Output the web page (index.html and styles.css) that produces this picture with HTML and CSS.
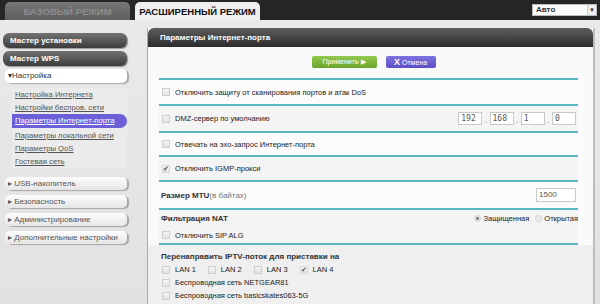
FILE: index.html
```html
<!DOCTYPE html>
<html lang="ru">
<head>
    <meta charset="UTF-8">
    <title>Параметры Интернет-порта</title>
    <link rel="stylesheet" href="styles.css">
</head>
<body>
    <div class="topbar">
        <div class="tab tab-basic">БАЗОВЫЙ РЕЖИМ</div>
        <div class="tab tab-adv">РАСШИРЕННЫЙ РЕЖИМ</div>
        <div class="lang">Авто<span class="lang-arrow">▼</span></div>
    </div>

    <div class="main">
        <div class="side">
            <div class="wiz">Мастер установки</div>
            <div class="wiz">Мастер WPS</div>
            <div class="group open">▾Настройка</div>
            <ul class="sub">
                <li>Настройка Интернета</li>
                <li>Настройки беспров. сети</li>
                <li class="active">Параметры Интернет-порта</li>
                <li>Параметры локальной сети</li>
                <li>Параметры QoS</li>
                <li>Гостевая сеть</li>
            </ul>
            <div class="group closed">▸ USB-накопитель</div>
            <div class="group closed">▸ Безопасность</div>
            <div class="group closed">▸ Администрирование</div>
            <div class="group closed">▸ Дополнительные настройки</div>
        </div>

        <div class="panel">
            <div class="panel-head">Параметры Интернет-порта</div>
            <div class="panel-body">
                <div class="actions">
                    <span class="btn btn-apply">Применить ▶</span>
                    <span class="btn btn-cancel"><b>X</b>Отмена</span>
                </div>

                <div class="row r1">
                    <span class="cb"></span>
                    <span class="lbl">Отключить защиту от сканирования портов и атак DoS</span>
                </div>
                <div class="row r2 alt">
                    <span class="cb"></span>
                    <span class="lbl">DMZ-сервер по умолчанию</span>
                    <div class="ip">
                        <span class="box">192</span>.
                        <span class="box">168</span>.
                        <span class="box">1</span>.
                        <span class="box">0</span>
                    </div>
                </div>
                <div class="row r3">
                    <span class="cb"></span>
                    <span class="lbl">Отвечать на эхо-запрос Интернет-порта</span>
                </div>
                <div class="row r4 alt">
                    <span class="cb on">✔</span>
                    <span class="lbl">Отключить IGMP-прокси</span>
                </div>
                <div class="row r5">
                    <span class="title">Размер MTU<span class="hint">(в байтах)</span></span>
                    <span class="box mtu">1500</span>
                </div>
                <div class="row r6 alt">
                    <div class="line">
                        <span class="title">Фильтрация NAT</span>
                        <div class="radios">
                            <span class="rd on"></span><span class="lbl">Защищенная</span>
                            <span class="rd"></span><span class="lbl">Открытая</span>
                        </div>
                    </div>
                    <div class="line">
                        <span class="cb"></span>
                        <span class="lbl">Отключить SIP ALG</span>
                    </div>
                </div>
                <div class="row r7">
                    <div class="line"><span class="title">Перенаправить IPTV-поток для приставки на</span></div>
                    <div class="line lans">
                        <span class="cb"></span><span class="lbl">LAN 1</span>
                        <span class="cb"></span><span class="lbl">LAN 2</span>
                        <span class="cb"></span><span class="lbl">LAN 3</span>
                        <span class="cb on">✔</span><span class="lbl">LAN 4</span>
                    </div>
                    <div class="line">
                        <span class="cb"></span>
                        <span class="lbl">Беспроводная сеть NETGEAR81</span>
                    </div>
                    <div class="line">
                        <span class="cb"></span>
                        <span class="lbl">Беспроводная сеть basicskates063-5G</span>
                    </div>
                </div>
            </div>
        </div>
    </div>
</body>
</html>
```

FILE: styles.css
```css
* {
    padding: 0;
    margin: 0;
    box-sizing: border-box;
}

body {
    width: 600px;
    height: 304px;
    overflow: hidden;
    background: #e4e4e4;
    font-family: "Liberation Sans", Arial, sans-serif;
    font-size: 8px;
    color: #333;
}

/* top bar */
.topbar {
    height: 20px;
    background: #262626;
    display: flex;
    align-items: flex-end;
    padding-left: 5px;
    gap: 5px;
}

.tab {
    width: 125px;
    height: 18px;
    border-radius: 5px 5px 0 0;
    font-size: 9.5px;
    font-weight: bold;
    line-height: 19px;
    text-align: center;
}

.tab-basic {
    background: linear-gradient(#777, #5e5e5e);
    color: #8c8c8c;
}

.tab-adv {
    background: #efefef;
    color: #111;
}

.lang {
    margin-left: auto;
    margin-right: 3px;
    margin-bottom: 4px;
    width: 65px;
    height: 12px;
    background: #fafafa;
    border: 1px solid #bbb;
    color: #333;
    font-size: 8px;
    font-weight: bold;
    line-height: 10px;
    padding-left: 3px;
    display: flex;
}

.lang-arrow {
    margin-left: auto;
    width: 9px;
    font-size: 6px;
    text-align: center;
    border-left: 1px solid #ccc;
    background: #eee;
}

.main {
    display: flex;
    padding-top: 8px;
    height: 284px;
    background: linear-gradient(#e9e9e9, #e2e2e2);
}

/* sidebar */
.side {
    width: 147px;
    padding: 5px 0 0 3px;
}

.wiz {
    width: 124px;
    height: 15px;
    margin-bottom: 3px;
    border-radius: 6px;
    background: linear-gradient(#737373, #3c3c3c);
    box-shadow: 1px 1px 1px #999;
    color: #fff;
    font-weight: bold;
    line-height: 15px;
    padding-left: 7px;
}

.group {
    width: 122px;
    height: 14px;
    margin-left: 2px;
    border-radius: 5px;
    line-height: 14px;
    padding-left: 3px;
}

.group.open {
    background: #fff;
    box-shadow: 2px 1px 1px #aaa;
    color: #333;
    margin-top: 2px;
}

.group.closed {
    background: linear-gradient(#fdfdfd, #e6e6e6);
    box-shadow: 2px 1px 1px #a5a5a5;
    color: #555;
    height: 13px;
    line-height: 13px;
    margin-bottom: 5px;
}

.sub {
    list-style: none;
    margin: 5px 0 9px 9px;
    width: 115px;
    background: #ebebeb;
    font-size: 7.7px;
}

.sub li {
    height: 13px;
    line-height: 13px;
    padding-left: 3px;
    color: #555;
    text-decoration: underline;
}

.sub li.active {
    background: #6c60d8;
    color: #fff;
    border-radius: 0 7px 7px 0;
    height: 14px;
    line-height: 14px;
    margin: 0 0 1px;
}

/* panel */
.panel {
    width: 448px;
    border-left: 1px solid #aaa;
    border-right: 2px solid #bdbdbd;
    background: #fafafa;
    display: flex;
    flex-direction: column;
}

.panel-head {
    height: 19px;
    background: linear-gradient(#5e5e5e, #2b2b2b);
    border-radius: 6px 6px 0 0;
    color: #fff;
    font-weight: bold;
    line-height: 19px;
    padding-left: 12px;
}

.panel-body {
    flex: 1;
    padding: 0 15px 0 11px;
}

.actions {
    height: 31px;
    display: flex;
    justify-content: center;
    padding: 9px 0 0 10px;
    gap: 9px;
}

.btn {
    height: 12px;
    border-radius: 2px;
    color: #fff;
    line-height: 12px;
    text-align: center;
    font-size: 7px;
}

.btn-apply {
    width: 65px;
    background: linear-gradient(#93c94f, #6aa52b);
}

.btn-cancel {
    width: 50px;
    background: linear-gradient(#7d72de, #5c4fc6);
}

.btn-cancel b {
    font-size: 9px;
    margin-right: 2px;
}

/* rows */
.row {
    border-top: 2px solid #58b6c3;
    display: flex;
    align-items: center;
    padding-left: 2px;
    background: #fbfbfb;
}

.row.alt {
    background: #f4f4f4;
}

.r1 { height: 26px; }
.r2 { height: 27px; padding-right: 2px; }
.r3 { height: 24px; }
.r4 { height: 25px; }
.r5 { height: 28px; justify-content: space-between; padding-right: 2px; }
.r6 { height: 37px; flex-direction: column; align-items: stretch; justify-content: center; gap: 4px; border-bottom: 2px solid #58b6c3; }
.r7 { flex-direction: column; align-items: stretch; padding-top: 5px; border-top: none; background: #efefef; margin: 0 -15px 0 -11px; padding-left: 13px; height: 60px; }

.line {
    display: flex;
    align-items: center;
    height: 13px;
}

.cb {
    width: 8px;
    height: 8px;
    border: 1px solid #cfcfcf;
    background: linear-gradient(#f4f4f4, #e2e2e2);
    margin: 0 5px 0 1px;
    font-size: 7px;
    line-height: 6px;
    color: #555;
    text-align: center;
}

.cb.on {
    border-color: #d8d8d8;
}

.lbl {
    color: #222;
    font-size: 7.5px;
}

.title {
    font-weight: bold;
    color: #333;
}

.hint {
    font-weight: normal;
    color: #777;
}

.ip {
    margin-left: auto;
    display: flex;
    align-items: flex-end;
    gap: 2.5px;
    color: #555;
}

.box {
    width: 24px;
    height: 13px;
    border: 1px solid #c9c9c9;
    background: #fff;
    color: #555;
    padding-left: 2px;
    line-height: 11px;
    font-family: "DejaVu Sans Mono", monospace;
    font-size: 8px;
    display: inline-block;
}

.box.mtu {
    width: 40px;
    height: 14px;
    font-family: "Liberation Sans", Arial, sans-serif;
    line-height: 12px;
}

.radios {
    margin-left: auto;
    display: flex;
    align-items: center;
}

.rd {
    width: 7px;
    height: 7px;
    border-radius: 50%;
    border: 1px solid #d0d0d0;
    background: #ececec;
    margin: 0 2px 0 6px;
}

.rd.on {
    background: radial-gradient(#777 0 35%, #ececec 45%);
}

.lans .lbl {
    margin-right: 11px;
}
```
